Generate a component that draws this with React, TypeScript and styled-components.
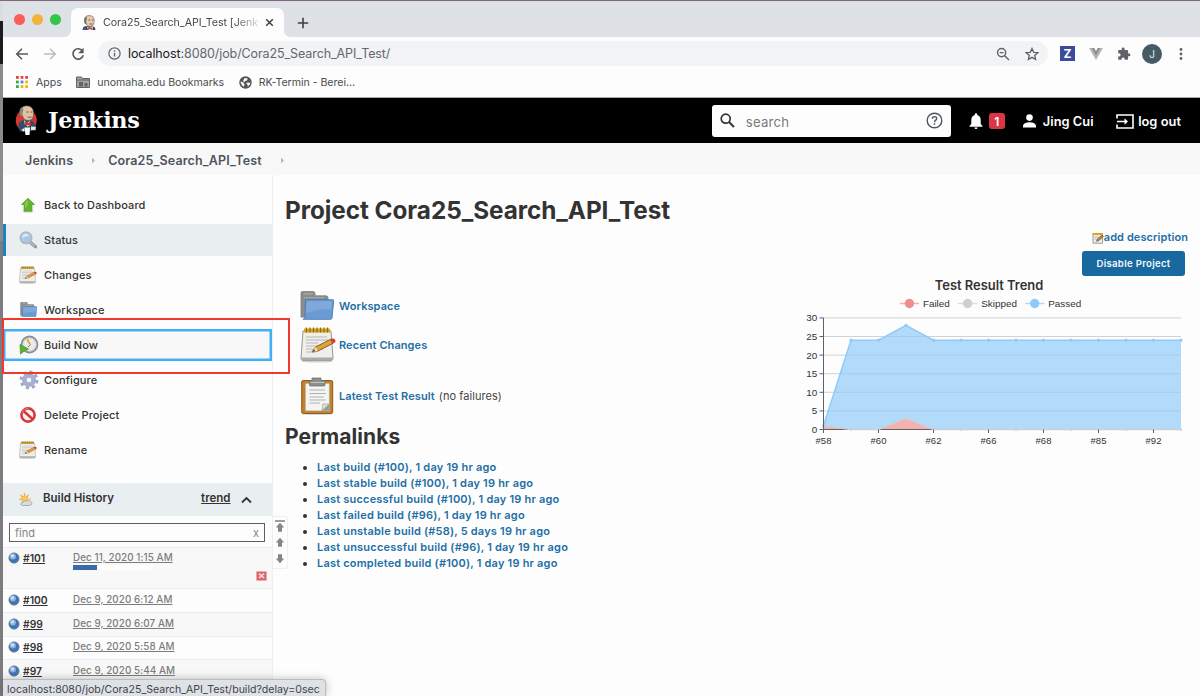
import React from "react";
import styled, { createGlobalStyle, css } from "styled-components";

const sans = `Inter, "Liberation Sans", sans-serif`;

const GlobalStyle = createGlobalStyle`
  *, *::before, *::after { box-sizing: border-box; }
  html, body { margin: 0; padding: 0; background: #fdfdfd; overflow: hidden; }
  body { font-family: ${sans}; color: #333; -webkit-font-smoothing: antialiased; }
  svg { display: block; flex: none; }
  ul, h1, h2, h3, p { margin: 0; padding: 0; }
`;

/* ---------- frame ---------- */

const Desktop = styled.div`
  position: relative;
  width: 1200px;
  height: 696px;
  overflow: hidden;
  padding: 1px 0 0 3px;
  background: linear-gradient(#dcdcdc 0 20px, #1c1c1c 20px 63px, #8b8b8e 63px 240px, #7c7c80 240px);
  border-top: 1px solid #7f6a86;
`;

const Window = styled.div`
  display: flex;
  flex-direction: column;
  height: 694px;
  background: #fdfdfd;
  border-top-left-radius: 4px;
  overflow: hidden;
`;

/* ---------- browser chrome ---------- */

const TabStrip = styled.div`
  display: flex;
  align-items: flex-end;
  height: 35px;
  background: #dee1e6;
`;

const Lights = styled.div`
  display: flex;
  gap: 7px;
  align-self: center;
  width: 68px;
  padding: 0 0 1px 11px;
`;

const Light = styled.span<{ $c: string }>`
  width: 11px;
  height: 11px;
  border-radius: 50%;
  background: ${(p) => p.$c};
`;

const Tab = styled.div`
  position: relative;
  display: flex;
  align-items: center;
  width: 213px;
  height: 29px;
  padding: 0 10px 0 11px;
  background: #fdfdfd;
  border-radius: 7px 7px 0 0;
  &::before, &::after {
    content: "";
    position: absolute;
    bottom: 0;
    width: 6px;
    height: 6px;
  }
  &::before { left: -6px; background: radial-gradient(circle at 0 0, transparent 5.5px, #fdfdfd 6px); }
  &::after { right: -6px; background: radial-gradient(circle at 100% 0, transparent 5.5px, #fdfdfd 6px); }
`;

const TabTitle = styled.span`
  flex: 1;
  margin-left: 7px;
  white-space: nowrap;
  font-size: 10.7px;
  letter-spacing: -0.06px;
  color: #45494d;
  mask-image: linear-gradient(90deg, #000 132px, transparent 160px);
`;

const NewTab = styled.div`
  align-self: center;
  margin: 7px 0 0 13px;
`;

const Toolbar = styled.div`
  display: flex;
  align-items: center;
  height: 32px;
  padding: 1px 12px 0 12px;
`;

const NavIcons = styled.div`
  display: flex;
  gap: 14px;
  width: 83px;
`;

const Omnibox = styled.div`
  display: flex;
  align-items: center;
  width: 950px;
  height: 25px;
  padding: 0 9px 0 10px;
  border-radius: 13px;
  background: #f1f3f4;
`;

const Url = styled.span`
  flex: 1;
  margin-left: 7px;
  font-size: 12.5px;
  letter-spacing: -0.1px;
  color: #63676b;
  b { font-weight: 400; color: #1f2124; }
`;

const OmniActions = styled.div`
  display: flex;
  gap: 15px;
`;

const Extensions = styled.div`
  display: flex;
  align-items: center;
  justify-content: space-between;
  width: 123px;
  margin-left: 12px;
`;

const Avatar = styled.span`
  display: grid;
  place-items: center;
  width: 20px;
  height: 20px;
  margin: 0 3px 0 -3px;
  border-radius: 50%;
  background: #455a64;
  color: #e6eaec;
  font-size: 10px;
`;

const ZBadge = styled.span`
  display: grid;
  place-items: center;
  width: 15px;
  height: 15px;
  background: #3a4a9f;
  color: #fff;
  font: 700 12px/15px ${sans};
`;

const Bookmarks = styled.div`
  display: flex;
  align-items: center;
  height: 29px;
  padding: 0 0 2px 13px;
  font-size: 10.6px;
  color: #494d51;
  border-bottom: 1px solid #a9a9a9;
`;

const Bookmark = styled.span<{ $gap: number; $inner: number }>`
  display: flex;
  align-items: center;
  gap: ${(p) => p.$inner}px;
  margin-right: ${(p) => p.$gap}px;
  letter-spacing: -0.03px;
  white-space: nowrap;
`;

/* ---------- Jenkins header ---------- */

const Header = styled.header`
  display: flex;
  align-items: center;
  height: 45px;
  padding: 0 19px 0 12px;
  background: #000;
  color: #fff;
`;

const Brand = styled.span`
  flex: 1;
  margin: 0 0 1px 11px;
  font: 700 22.3px/30px "DejaVu Serif", serif;
  letter-spacing: -0.3px;
`;

const SearchBox = styled.div`
  display: flex;
  align-items: center;
  width: 239px;
  height: 32px;
  padding: 0 8px;
  border-radius: 3px;
  background: #fdfdfd;
  color: #7a7a7a;
  font-size: 13.2px;
  letter-spacing: 0.2px;
  span { flex: 1; margin: 2px 0 0 11px; }
`;

const HeaderItem = styled.div<{ $ml: number; $gap: number }>`
  display: flex;
  align-items: center;
  gap: ${(p) => p.$gap}px;
  margin-left: ${(p) => p.$ml}px;
  padding-top: 1px;
  font-size: 12.8px;
  font-weight: 600;
  letter-spacing: 0.05px;
  white-space: nowrap;
`;

const Count = styled.span`
  display: grid;
  place-items: center;
  width: 16px;
  height: 16px;
  border-radius: 3px;
  background: #dc3545;
  font-size: 12px;
`;

const Crumbs = styled.nav`
  display: flex;
  align-items: center;
  height: 32px;
  padding: 2px 0 0 22px;
  background: #f8f8f8;
  color: #4d545d;
  font-size: 12.5px;
  font-weight: 600;
  letter-spacing: 0.14px;
  svg { margin: 0 12px 0 18px; }
`;

/* ---------- sidebar ---------- */

const Body = styled.div`
  display: flex;
  flex: 1;
  min-height: 0;
`;

const Sidebar = styled.aside`
  display: flex;
  flex-direction: column;
  width: 270px;
  border-right: 1px solid #eceff3;
  overflow: hidden;
  flex: none;
`;

const Tasks = styled.ul`
  display: flex;
  flex-direction: column;
  gap: 3px;
  padding: 14px 0 17px;
  list-style: none;
`;

const Task = styled.li<{ $state?: "active" | "focus" }>`
  display: flex;
  align-items: center;
  gap: 7px;
  height: 32px;
  padding: 0 0 1px 16px;
  font-size: 11px;
  font-weight: 500;
  letter-spacing: 0.12px;
  color: #333;
  ${(p) =>
    p.$state === "active" &&
    css`
      background: #e9eef1;
      box-shadow: inset 3px 0 #1b83c4;
    `}
  ${(p) =>
    p.$state === "focus" &&
    css`
      background: #f8f8f8;
      box-shadow: inset 0 0 0 2.5px #42b0f5;
    `}
`;

const HistoryHead = styled.div`
  display: flex;
  align-items: center;
  height: 33px;
  padding: 0 20px 3px 15px;
  background: #e9eef1;
  font-size: 11.5px;
  font-weight: 600;
  u { margin: 0 10.5px 0 auto; text-underline-offset: 1px; }
  strong { margin-left: 10px; font-weight: 600; }
  svg { position: relative; top: 1.5px; }
`;

const FindRow = styled.div`
  height: 31px;
  padding: 7px 7px 0 6px;
`;

const Find = styled.div`
  display: flex;
  justify-content: space-between;
  align-items: center;
  height: 19px;
  padding: 0 5px;
  border: 1px solid #5f5f5f;
  font-size: 11px;
  color: #858585;
`;

const Build = styled.div<{ $alt?: boolean; $tall?: boolean }>`
  display: flex;
  flex: none;
  align-items: ${(p) => (p.$tall ? "flex-start" : "center")};
  height: ${(p) => (p.$tall ? 41 : 23.8)}px;
  padding: ${(p) => (p.$tall ? "4px 5px 0 5px" : "0 5px 1px")};
  border-top: 1px solid #e6eef5;
  background: ${(p) => (p.$alt ? "#f8f8f8" : "#fdfdfd")};
  u { text-underline-offset: 1px; }
`;

const BuildNo = styled.u`
  width: 50px;
  margin-left: 3px;
  font-size: 10.3px;
  font-weight: 600;
  color: #333;
`;

const BuildDate = styled.div`
  flex: 1;
  color: #7c7c7c;
  font-size: 9.8px;
  line-height: 12px;
  font-weight: 500;
  letter-spacing: 0.1px;
`;

const Progress = styled.div`
  width: 80px;
  height: 5px;
  margin-top: 1px;
  background: #fdfdfd;
  &::before { content: ""; display: block; width: 24px; height: 5px; background: #3a6ba8; }
`;

const StopCell = styled.div`
  align-self: flex-end;
  padding-bottom: 7px;
`;

const Pager = styled.div`
  position: absolute;
  left: 273px;
  top: 515px;
  display: flex;
  flex-direction: column;
  align-items: center;
  gap: 5px;
  width: 15px;
  height: 53px;
  padding-top: 3px;
  border: 1px solid #eceff3;
  border-left: 0;
  border-radius: 0 3px 3px 0;
`;

/* ---------- main ---------- */

const Main = styled.main`
  display: flex;
  flex: 1;
  justify-content: space-between;
  padding: 0 12px 0 12px;
`;

const Left = styled.div`
  flex: 1;
`;

const Title = styled.h1`
  height: 30px;
  margin-top: 20px;
  font-size: 24.3px;
  line-height: 30px;
  font-weight: 700;
  letter-spacing: -0.05px;
  white-space: nowrap;
`;

const Links = styled.div`
  padding: 62px 0 0 15px;
`;

const LinkRow = styled.div<{ $h: number }>`
  display: flex;
  align-items: center;
  height: ${(p) => p.$h}px;
  gap: 3px;
  font-size: 11px;
  white-space: nowrap;
`;

const LinkIcon = styled.span`
  width: 36px;
`;

const Note = styled.span`
  margin-left: 1px;
  color: #444;
  letter-spacing: 0.06px;
`;

const Anchor = styled.a<{ $ls?: number }>`
  color: #1f6fa5;
  font-weight: 600;
  letter-spacing: ${(p) => p.$ls ?? 0.08}px;
`;

const Subtitle = styled.h2`
  margin-top: -3px;
  font-size: 21px;
  line-height: 26px;
  font-weight: 700;
  letter-spacing: 0.1px;
`;

const Permalinks = styled.ul`
  margin-top: 10.4px;
  padding-left: 32px;
  font-size: 11px;
  line-height: 15.93px;
`;

const Right = styled.div`
  display: flex;
  flex-direction: column;
  align-items: flex-end;
  width: 390px;
  padding-top: 54px;
`;

const AddDescription = styled.div`
  display: flex;
  align-items: center;
  height: 15px;
  font-size: 11px;
  svg { margin-top: 2px; }
`;

const Button = styled.button`
  width: 103px;
  height: 25px;
  margin: 7px 3px -1px 0;
  padding: 0;
  border: 0;
  border-radius: 3px;
  background: #1769a0;
  color: #f3f8fb;
  font: 600 9.6px/25px ${sans};
  letter-spacing: 0.3px;
`;

const StatusBubble = styled.div`
  position: absolute;
  left: 3px;
  bottom: 0;
  width: 323px;
  height: 17px;
  padding-left: 4px;
  border: 1px solid #b9bcc1;
  border-left: 0;
  border-bottom: 0;
  border-radius: 0 4px 0 0;
  background: #dee1e6;
  box-shadow: 0 0 8px rgba(0, 0, 0, 0.25);
  color: #3f4347;
  font-size: 10.6px;
  letter-spacing: -0.015px;
  line-height: 19px;
  white-space: nowrap;
`;

const Highlight = styled.div`
  position: absolute;
  left: 2px;
  top: 317px;
  width: 288px;
  height: 56px;
  border: 2px solid #f2382c;
`;

/* ---------- drawings ---------- */

const ButlerLogo = () => (
  <svg width="22" height="31" viewBox="0 0 22 31">
    <ellipse cx="11.300" cy="15.500" rx="10.500" ry="11.300" fill="#d33833" />
    <path d="M3.500 19Q6 15 10 15l6 .5q4.500 1.500 4.500 5.500l-1.500 4-4 1.500H5q-2-3-1.500-7.500z" fill="#2f4d66" />
    <path d="M9 15l3 3 3-2 .3 4.500-3 1-2.500-2z" fill="#dfe3e6" />
    <path d="M10.300 17l2.700 1.300 3.200-1.500v4L13 19.700l-2.700 1.300z" fill="#d33833" stroke="#7d1512" strokeWidth=".4" />
    <path d="M6 7Q5.500 1 11.500 .8 18 .8 18.500 7.500q.5 7-4.500 8-5 .3-6.500-4.500Q6 9.500 6 7z" fill="#dfc2a2" stroke="#5d4a3c" strokeWidth=".6" />
    <path d="M5.300 10.500Q3 4.500 7 2L8.500 4.500 7.500 8l.3 3.500z" fill="#8a8580" />
    <path d="M11.500 7h2M15.500 7h1.800M12.500 12q2 1 4-.3" stroke="#5a4636" strokeWidth=".9" fill="none" />
    <path d="M9.500 22.500h5.500l-.5 7.500h-4z" fill="#fff" />
    <path d="M6.500 24.500l3-1.500v3l-1.500.5z" fill="#e6e9ea" />
    <path d="M16 21.500l5 .3-.5 3.500-4.500-.3z" fill="#dfe3e5" />
  </svg>
);

const ButlerFavicon = () => (
  <svg width="14" height="15" viewBox="0 0 14 15">
    <path d="M.5 15q0-3.500 3.500-4l7 .3q2.500.7 2.500 3.700z" fill="#3c4650" />
    <path d="M4.500 11l3 2 4-2-1 4H6z" fill="#eceff1" />
    <path d="M2.800 5Q2.500.8 7 .6q5 0 5.200 4.700.2 5.700-3.700 6.300Q5 11.800 4 8.500 2.800 7.500 2.800 5z" fill="#e8cdb0" stroke="#6b5647" strokeWidth=".6" />
    <path d="M2.600 8.500Q1 3.500 4 1.500L5 3 4.300 6l.2 3.500z" fill="#77706a" />
    <path d="M6.500 5h1.700M9.800 5h1.500M7.500 9h3" stroke="#5a4636" strokeWidth=".9" />
    <path d="M5.500 12.200l2.500 1 2.500-1V15L8 14l-2.500 1z" fill="#d33833" />
    <path d="M1 12.500h3V15H1z" fill="#365d94" />
  </svg>
);

const NotepadIcon = ({ size }: { size: number }) => (
  <svg width={size} height={size} viewBox="0 0 36 36">
    <ellipse cx="17" cy="34.300" rx="16" ry="1.300" fill="#d2d2d2" />
    <path d="M3 4h28l2 27q0 2.500-2 2.500H3q-2 0-2-2.500z" fill="#eeeeec" stroke="#969892" strokeWidth="1" />
    <path d="M1.200 30.500h31.600V32q-.5 1.500-2 1.500H3.500q-2 0-2.300-1.500z" fill="#aaaca6" />
    <path d="M6 10h21M6 13h22M6 16h12M6 19h21M6 22h17M6 25h10" stroke="#b8b9b5" strokeWidth="1" />
    <path d="M4 1.500h26v4H4z" fill="#d9a31b" />
    <path d="M6.500 .5v5M10 .5v5M13.500 .5v5M17 .5v5M20.500 .5v5M24 .5v5M27.500 .5v5" stroke="#8a6b1e" strokeWidth="1.200" />
    <path d="M12 25l3.500-5L31 12l2.500 4-15.500 8z" fill="#e0a13c" stroke="#7d531a" strokeWidth=".9" />
    <path d="M12 25l3.500-5 2.500 4z" fill="#f3dfb8" />
    <path d="M12 25l2-2.800 1 1.700z" fill="#333" />
    <path d="M30 12.500l2-1q3.700-.5 3.500 3.500L32.500 16.500z" fill="#dc3a2c" />
  </svg>
);

const FolderIcon = ({ w, h }: { w: number; h: number }) => (
  <svg width={w} height={h} viewBox="0 0 34 30" preserveAspectRatio="none">
    <path d="M1 2q0-1.500 1.500-1.500H13q2 0 2 2V5h11q2 0 2 2v20H1z" fill="#8b8d8a" stroke="#7b7d78" strokeWidth=".8" />
    <path d="M4 3h9M4 7h20" stroke="#adafab" />
    <path d="M5.500 9H33q.8 0 .7 1L32 28q-.2 1.300-1.500 1.300H3q2 0 2-3z" fill="#6b9bd4" stroke="#4a78b0" strokeWidth=".9" />
    <path d="M6.500 10.500H32L31 19Q17 18 6 23z" fill="#7fa9db" />
  </svg>
);

const ClipboardIcon = () => (
  <svg width="36" height="38" viewBox="0 0 36 38">
    <ellipse cx="17" cy="37" rx="15" ry="1" fill="#d6d6d6" />
    <rect x="1.700" y="3.500" width="31" height="33" rx="1.500" fill="#c1802b" stroke="#8f5e1c" />
    <path d="M5.500 6.500h23.800v27.300H5.500z" fill="#f4f4f2" stroke="#b9b9b5" strokeWidth=".6" />
    <path d="M29.300 27v6.800H22z" fill="#9a9c97" />
    <path d="M22 33.800L29.300 27h-6.500z" fill="#dcdcd8" stroke="#888" strokeWidth=".5" />
    <path d="M9.500 13H25M9.500 16.500H26M9.500 20H24M9.500 23h16M9.500 26H20" stroke="#b1b2af" />
    <path d="M12 1h9v2.500h4V8q0 1-1 1H10.500q-1 0-1-1V3.500H12z" fill="#8c8e8a" stroke="#6c6e69" strokeWidth=".7" />
    <path d="M10.500 5.500h14" stroke="#c3c5c0" />
  </svg>
);

const UpIcon = () => (
  <svg width="18" height="18" viewBox="0 0 18 18">
    <ellipse cx="9" cy="15.800" rx="6" ry="1" fill="#d9e2d4" />
    <path d="M9 2.200L15.500 8.500H13V15.200H5V8.500H2.500z" fill="#62b52d" stroke="#4f9a25" strokeWidth=".7" />
    <path d="M9 3.500L4.800 7.800H6V13L9 9z" fill="#80c94d" />
  </svg>
);

const SearchIcon = () => (
  <svg width="18" height="18" viewBox="0 0 18 18">
    <path d="M11 11l5.500 4.700" stroke="#8f9296" strokeWidth="3.200" strokeLinecap="round" />
    <path d="M11 11l5 4.300" stroke="#c3c5c8" strokeWidth="1.200" />
    <circle cx="7" cy="6.800" r="5.800" fill="#a9c6ea" stroke="#b2b7be" strokeWidth="1.500" />
    <path d="M3 7q0-4 4-4.300Q9 3 10 5q-4 0-7 2z" fill="#dde9f7" />
  </svg>
);

const ClockIcon = () => (
  <svg width="20" height="20" viewBox="0 0 20 20">
    <circle cx="10.500" cy="9.500" r="8" fill="#ececE4" stroke="#8a8c9c" strokeWidth="1.800" />
    <circle cx="10.500" cy="9.500" r="6.500" fill="none" stroke="#c5c7cf" strokeWidth=".8" />
    <path d="M8 4.500l3.500 5.200L9 12" stroke="#777" strokeWidth="1" fill="none" />
    <path d="M7.500 4.500l2-.5 1.500 4-1.500.5z" fill="#e8a92e" />
    <path d="M1 9.500L9.500 14 6 15.500 1.500 19z" fill="#56b52c" stroke="#3f9020" strokeWidth=".7" />
  </svg>
);

const GearIcon = () => (
  <svg width="20" height="20" viewBox="0 0 20 20">
    <circle cx="10" cy="10" r="7.800" fill="none" stroke="#9ca7c6" strokeWidth="3.200" strokeDasharray="3.100 3.030" />
    <circle cx="10" cy="10" r="4.900" fill="none" stroke="#a7b1ce" strokeWidth="4.200" />
    <circle cx="10" cy="10" r="2.700" fill="#fdfdfd" stroke="#8f9abb" strokeWidth=".7" />
    <path d="M8 2.200h4l.5 2h-5z" fill="#4b639c" />
  </svg>
);

const BanIcon = () => (
  <svg width="18" height="18" viewBox="0 0 18 18">
    <circle cx="9" cy="9" r="6.600" fill="#faf6f5" stroke="#d83a3f" strokeWidth="2.600" />
    <path d="M4.500 5l9 8" stroke="#d83a3f" strokeWidth="2.600" />
    <path d="M3 7Q4.500 2.500 9 2.400" stroke="#ef7d7c" strokeWidth=".9" fill="none" />
  </svg>
);

const WeatherIcon = () => (
  <svg width="15" height="15" viewBox="0 0 15 15">
    <path d="M6.500 1v3M2.500 3l2 2M10.500 3l-2 2M1 7.500h3M13 7h-2" stroke="#edb13f" strokeWidth="1.200" />
    <circle cx="6.700" cy="7" r="3.200" fill="#f8c85c" stroke="#efa845" strokeWidth=".7" />
    <path d="M4.500 13.500q-2.500-.5-1.500-2.300.7-1 2-.8 1.500-2.300 3.700-1.400Q10.500 7.500 12 9q2.300 1 1.800 2.700-.4 1.800-2.500 1.800z" fill="#dbdcd9" stroke="#a0a29d" strokeWidth=".8" />
  </svg>
);

const Ball = () => (
  <svg width="12" height="12" viewBox="0 0 12 12">
    <circle cx="6" cy="6" r="5.200" fill="#3f74b4" stroke="#7d8b9d" strokeWidth=".7" />
    <circle cx="4.900" cy="4.600" r="3" fill="#8fb6e0" />
    <circle cx="4.500" cy="4" r="1.400" fill="#d5e6f8" />
  </svg>
);

const StopIcon = () => (
  <svg width="11" height="10" viewBox="0 0 11 10">
    <rect x=".4" y=".4" width="10.200" height="9.200" rx="1" fill="#e0656a" stroke="#e9a9ab" strokeWidth=".8" />
    <path d="M3 2.700l5 4.300M8 2.700L3 7" stroke="#f8dcdc" strokeWidth="1.600" />
  </svg>
);

const ArrowGlyph = ({ dir, bar }: { dir: "up" | "down"; bar?: boolean }) => (
  <svg width="10" height={bar ? 12 : 11} viewBox={bar ? "0 0 10 12" : "0 0 10 11"}>
    {bar && <path d="M0 1h10" stroke="#858585" strokeWidth="1.600" />}
    <path
      transform={bar ? "translate(0 2)" : dir === "down" ? "rotate(180 5 5.500)" : undefined}
      d="M5 .8L9.200 5.500H7V9.800H3V5.500H.8z"
      fill="#858585"
    />
  </svg>
);

const NoteEdit = () => (
  <svg width="12" height="12" viewBox="0 0 12 12">
    <path d="M1 1.500h9.500v9.700H1z" fill="#efefec" stroke="#85878a" strokeWidth=".8" />
    <path d="M.6 1h10v2H.6z" fill="#dfa321" />
    <path d="M2.500 5h5M2.500 7h3" stroke="#aaa" strokeWidth=".8" />
    <path d="M4.500 9.300l1-2.300 4.500-4 1.500 1.500L6.800 8.600z" fill="#c98a3a" stroke="#5b3d16" strokeWidth=".6" />
  </svg>
);

const CrumbArrow = () => (
  <svg width="5" height="7" viewBox="0 0 5 7">
    <path d="M1 .5l3 3-3 3z" fill="#b4b8bd" />
  </svg>
);

/* ---------- chart ---------- */

const ChartText = styled.text<{ $size?: number; $weight?: number; $anchor?: string }>`
  font-family: ${sans};
  font-size: ${(p) => p.$size ?? 9.9}px;
  font-weight: ${(p) => p.$weight ?? 400};
  text-anchor: ${(p) => p.$anchor ?? "start"};
  fill: #333;
`;

const AxisText = styled(ChartText)`
  font-family: "Liberation Sans", Arial, sans-serif;
`;

const passed = [1, 24, 24, 28, 24, 24, 24, 24, 24, 24, 24, 24, 24, 24];
const failed = [1, 0, 0, 3, 0, 0, 0, 0, 0, 0, 0, 0, 0, 0];
const ticks = ["#58", "#60", "#62", "#66", "#68", "#85", "#92"];
const X0 = 25.5;
const STEP = 27.5;
const Y0 = 154.5;
const UNIT = 3.72;
const px = (i: number) => X0 + i * STEP;
const py = (v: number) => Y0 - v * UNIT;
const line = (d: number[]) => d.map((v, i) => `${px(i)},${py(v)}`).join(" ");

const Legend = ({ x, color, name }: { x: number; color: string; name: string }) => (
  <g>
    <path d={`M${x} 28.500h19.500`} stroke={color} strokeWidth="1.400" opacity=".7" />
    <circle cx={x + 9.700} cy="28.500" r="4.700" fill={color} />
    <AxisText x={x + 23.200} y="32" $size={9.9}>{name}</AxisText>
  </g>
);

const Chart = () => (
  <svg width="390" height="180" viewBox="0 0 390 180">
    <ChartText x="191" y="15" $size={12.9} $weight={600} $anchor="middle">Test Result Trend</ChartText>
    <Legend x={101.7} color="#ee8f8f" name="Failed" />
    <Legend x={160} color="#cfcfcf" name="Skipped" />
    <Legend x={227} color="#90caf9" name="Passed" />
    {[5, 10, 15, 20, 25, 30].map((v) => (
      <path key={v} d={`M${X0} ${py(v)}H${px(13)}`} stroke="#d2d2d2" strokeWidth="1" />
    ))}
    <polygon points={`${line(passed)} ${px(13)},${Y0} ${X0},${Y0}`} fill="#90caf9" opacity=".7" />
    <polygon points={`${line(failed)} ${px(13)},${Y0} ${X0},${Y0}`} fill="#f5b1b1" />
    <path d={`M${X0} ${Y0}H${px(13)}`} stroke="#5e6166" strokeWidth="1" />
    <polyline points={line(failed)} fill="none" stroke="#cfcfcf" strokeWidth="1.500" />
    <polyline points={line(passed)} fill="none" stroke="#90caf9" strokeWidth="1.500" />
    {passed.map((v, i) => (
      <circle key={i} cx={px(i)} cy={py(v)} r="1.600" fill="#90caf9" />
    ))}
    {failed.map((v, i) => (
      <circle key={i} cx={px(i)} cy={py(v)} r="1.300" fill="#cfcfcf" />
    ))}
    <path d={`M${X0} ${py(30)}V${Y0}`} stroke="#5e6166" strokeWidth="1" />
    {[0, 5, 10, 15, 20, 25, 30].map((v) => (
      <g key={v}>
        <path d={`M${X0 - 4} ${py(v)}h4`} stroke="#5e6166" strokeWidth="1" />
        <AxisText x={X0 - 6.300} y={py(v) + 3.400} $anchor="end">{v}</AxisText>
      </g>
    ))}
    {ticks.map((t, i) => (
      <g key={t}>
        <path d={`M${px(i * 2)} ${Y0}v3.500`} stroke="#5e6166" strokeWidth="1" />
        <AxisText x={px(i * 2)} y={Y0 + 14.500} $size={9.5} $anchor="middle">{t}</AxisText>
      </g>
    ))}
  </svg>
);

const appColors = ["#e8453c", "#e8453c", "#e8453c", "#34a853", "#4285f4", "#f4b400", "#34a853", "#f4b400", "#f4b400"];

const permalinks = [
  "Last build (#100), 1 day 19 hr ago",
  "Last stable build (#100), 1 day 19 hr ago",
  "Last successful build (#100), 1 day 19 hr ago",
  "Last failed build (#96), 1 day 19 hr ago",
  "Last unstable build (#58), 5 days 19 hr ago",
  "Last unsuccessful build (#96), 1 day 19 hr ago",
  "Last completed build (#100), 1 day 19 hr ago",
];

const builds = [
  ["#100", "Dec 9, 2020 6:12 AM"],
  ["#99", "Dec 9, 2020 6:07 AM"],
  ["#98", "Dec 9, 2020 5:58 AM"],
  ["#97", "Dec 9, 2020 5:44 AM"],
];

const IconSlot = styled.span`
  display: grid;
  place-items: center;
  width: 18px;
  height: 20px;
`;

const tasks: { name: string; icon: React.ReactNode; state?: "active" | "focus" }[] = [
  { name: "Back to Dashboard", icon: <UpIcon /> },
  { name: "Status", icon: <SearchIcon />, state: "active" },
  { name: "Changes", icon: <NotepadIcon size={18} /> },
  { name: "Workspace", icon: <FolderIcon w={17} h={15} /> },
  { name: "Build Now", icon: <ClockIcon />, state: "focus" },
  { name: "Configure", icon: <GearIcon /> },
  { name: "Delete Project", icon: <BanIcon /> },
  { name: "Rename", icon: <NotepadIcon size={18} /> },
];

const Chrome = () => (
  <>
    <TabStrip>
      <Lights>
        <Light $c="#fc5b57" />
        <Light $c="#f0b43c" />
        <Light $c="#34c648" />
      </Lights>
      <Tab>
        <ButlerFavicon />
        <TabTitle>Cora25_Search_API_Test [Jenk</TabTitle>
        <svg width="9" height="9" viewBox="0 0 9 9">
          <path d="M1.200 1.200l6.600 6.600M7.800 1.200L1.200 7.800" stroke="#3c4043" strokeWidth="1.500" />
        </svg>
      </Tab>
      <NewTab>
        <svg width="12" height="12" viewBox="0 0 12 12">
          <path d="M6 .8v10.400M.8 6h10.400" stroke="#3c4043" strokeWidth="1.600" />
        </svg>
      </NewTab>
    </TabStrip>
    <Toolbar>
      <NavIcons>
        <svg width="14" height="14" viewBox="0 0 14 14" fill="none" stroke="#55595d" strokeWidth="1.500">
          <path d="M13 7H2M7 1.700L1.700 7 7 12.300" />
        </svg>
        <svg width="14" height="14" viewBox="0 0 14 14" fill="none" stroke="#b8babd" strokeWidth="1.400">
          <path d="M1 7h11M7 1.700L12.300 7 7 12.300" />
        </svg>
        <svg width="14" height="14" viewBox="0 0 14 14" fill="none" stroke="#55595d" strokeWidth="1.600">
          <path d="M11.500 4A5.200 5.200 0 1 0 12.200 8.200" />
          <path d="M12.600 .8v5.500H7.200z" fill="#55595d" stroke="none" />
        </svg>
      </NavIcons>
      <Omnibox>
        <svg width="13" height="13" viewBox="0 0 13 13">
          <circle cx="6.500" cy="6.500" r="5.600" fill="none" stroke="#5f6368" strokeWidth="1.200" />
          <path d="M6.500 5.800v3.700M6.500 3.300v1.500" stroke="#5f6368" strokeWidth="1.300" />
        </svg>
        <Url><b>localhost</b>:8080/job/Cora25_Search_API_Test/</Url>
        <OmniActions>
          <svg width="14" height="14" viewBox="0 0 14 14" fill="none" stroke="#5f6368" strokeWidth="1.400">
            <circle cx="5.600" cy="5.600" r="4.100" />
            <path d="M8.700 8.700L13 13M3.700 5.600h3.800" />
          </svg>
          <svg width="14" height="14" viewBox="0 0 24 24" fill="none" stroke="#5f6368" strokeWidth="2.200">
            <path d="M12 2.500l2.900 6.600 7.100.6-5.400 4.700 1.600 7L12 17.700 5.800 21.400l1.600-7L2 9.700l7.100-.6z" />
          </svg>
        </OmniActions>
      </Omnibox>
      <Extensions>
        <ZBadge>Z</ZBadge>
        <svg width="14" height="12" viewBox="0 0 14 12">
          <path d="M0 0h5l2 3.500L9 0h5L7 12z" fill="#b5b5b5" />
          <path d="M2.800 0H5l2 3.500L9 0h2.200L7 7.500z" fill="#8b8b8b" />
        </svg>
        <svg width="14" height="14" viewBox="0 0 24 24">
          <path d="M20.500 11H19V7c0-1.100-.9-2-2-2h-4V3.500a2.500 2.500 0 0 0-5 0V5H4c-1.100 0-2 .9-2 2v3.800h1.500a2.700 2.700 0 0 1 0 5.400H2V20c0 1.100.9 2 2 2h3.800v-1.500a2.700 2.700 0 0 1 5.400 0V22H17c1.100 0 2-.9 2-2v-4h1.500a2.500 2.500 0 0 0 0-5z" fill="#5f6368" />
        </svg>
        <Avatar>J</Avatar>
        <svg width="4" height="14" viewBox="0 0 4 14" fill="#5f6368">
          <circle cx="2" cy="2.500" r="1.400" />
          <circle cx="2" cy="7" r="1.400" />
          <circle cx="2" cy="11.500" r="1.400" />
        </svg>
      </Extensions>
    </Toolbar>
    <Bookmarks>
      <Bookmark $gap={14.5} $inner={8}>
        <svg width="12" height="12" viewBox="0 0 12 12">
          {appColors.map((c, i) => (
            <rect key={i} x={(i % 3) * 4.600} y={Math.floor(i / 3) * 4.600} width="2.800" height="2.800" fill={c} />
          ))}
        </svg>
        Apps
      </Bookmark>
      <Bookmark $gap={14.5} $inner={7}>
        <svg width="14" height="12" viewBox="0 0 14 12">
          <path d="M.5 1h5l1 1.500h7v9H.5z" fill="#a2a4a6" stroke="#5f6164" />
          <path d="M1 4h12" stroke="#5f6164" />
          <path d="M3 6h4v4.500H3zM8.500 7h3v3.500h-3z" fill="#606265" />
        </svg>
        unomaha.edu Bookmarks
      </Bookmark>
      <Bookmark $gap={0} $inner={7}>
        <svg width="13" height="13" viewBox="0 0 13 13">
          <circle cx="6.500" cy="6.500" r="6.200" fill="#505458" />
          <path d="M1.500 5.500L4 6.200l1.500 2L5 10.800Q2 9.500 1.500 5.500zM5.500 2l3.300.5L8 4.500l-2 .5-.5 1.500L4 5zM8.500 6.500l3 .3Q11 9.500 8.800 10.500l-.3-2-1.500-.8z" fill="#f4f4f4" />
        </svg>
        RK-Termin - Berei…
      </Bookmark>
    </Bookmarks>
  </>
);

export default function App() {
  return (
    <Desktop>
      <GlobalStyle />
      <Window>
        <Chrome />
        <Header>
          <ButlerLogo />
          <Brand>Jenkins</Brand>
          <SearchBox>
            <svg width="15" height="15" viewBox="0 0 15 15" fill="none" stroke="#333" strokeWidth="1.700">
              <circle cx="5.700" cy="5.700" r="4.500" />
              <path d="M9 9l5 5" strokeWidth="2" />
            </svg>
            <span>search</span>
            <svg width="17" height="17" viewBox="0 0 17 17" fill="none" stroke="#4d545d">
              <circle cx="8.500" cy="8.500" r="7.300" strokeWidth="1.400" />
              <path d="M6.300 6.800Q6.300 4.600 8.500 4.600t2.200 2q0 1-1.200 1.800-1 .7-1 1.800" strokeWidth="1.400" />
              <path d="M8.500 11.300v1.500" strokeWidth="1.500" />
            </svg>
          </SearchBox>
          <HeaderItem $ml={18} $gap={6}>
            <svg width="14" height="16" viewBox="0 0 14 16" fill="#fff">
              <path d="M7 .3q1.200 0 1.200 1.200v.4q3.500 1 3.500 5V11L13.500 13v.7H.5V13L2.300 11V6.900q0-4 3.500-5v-.4Q5.800.3 7 .3zM5.400 14.400h3.200Q8.400 16 7 16t-1.600-1.600z" />
            </svg>
            <Count>1</Count>
          </HeaderItem>
          <HeaderItem $ml={18} $gap={7}>
            <svg width="13" height="14" viewBox="0 0 13 14" fill="#fff">
              <circle cx="6.500" cy="3.600" r="3.300" />
              <path d="M0 13.500v-1.700q.5-3.300 6.500-3.500 6 .2 6.500 3.500v1.700z" />
            </svg>
            Jing Cui
          </HeaderItem>
          <HeaderItem $ml={22.5} $gap={4}>
            <svg width="18" height="15" viewBox="0 0 18 15" fill="none" stroke="#fff" strokeWidth="1.600">
              <path d="M1 4.500V1h16v13H1v-3.500M1 7.500h8" />
              <path d="M8.500 4.300L12 7.500l-3.500 3.200z" fill="#fff" stroke="none" />
            </svg>
            log out
          </HeaderItem>
        </Header>
        <Crumbs>
          Jenkins
          <CrumbArrow />
          Cora25_Search_API_Test
          <CrumbArrow />
        </Crumbs>
        <Body>
          <Sidebar>
            <Tasks>
              {tasks.map((t) => (
                <Task key={t.name} $state={t.state}>
                  <IconSlot>{t.icon}</IconSlot>
                  {t.name}
                </Task>
              ))}
            </Tasks>
            <HistoryHead>
              <WeatherIcon />
              <strong>Build History</strong>
              <u>trend</u>
              <svg width="11" height="8" viewBox="0 0 11 8" fill="none" stroke="#333" strokeWidth="1.800">
                <path d="M1 6.500l4.500-4.500L10 6.500" />
              </svg>
            </HistoryHead>
            <FindRow>
              <Find>
                <span>find</span>
                <span>x</span>
              </Find>
            </FindRow>
            <Build $alt $tall>
              <Ball />
              <BuildNo>#101</BuildNo>
              <BuildDate>
                <u>Dec 11, 2020 1:15 AM</u>
                <Progress />
              </BuildDate>
              <StopCell>
                <StopIcon />
              </StopCell>
            </Build>
            {builds.map(([no, date], i) => (
              <Build key={no} $alt={i % 2 === 1}>
                <Ball />
                <BuildNo>{no}</BuildNo>
                <BuildDate>
                  <u>{date}</u>
                </BuildDate>
              </Build>
            ))}
          </Sidebar>
          <Main>
            <Left>
              <Title>Project Cora25_Search_API_Test</Title>
              <Links>
                <LinkRow $h={37}>
                  <LinkIcon><FolderIcon w={34} h={29} /></LinkIcon>
                  <Anchor>Workspace</Anchor>
                </LinkRow>
                <LinkRow $h={41}>
                  <LinkIcon><NotepadIcon size={36} /></LinkIcon>
                  <Anchor>Recent Changes</Anchor>
                </LinkRow>
                <LinkRow $h={62}>
                  <LinkIcon><ClipboardIcon /></LinkIcon>
                  <Anchor>Latest Test Result</Anchor>
                  <Note>(no failures)</Note>
                </LinkRow>
              </Links>
              <Subtitle>Permalinks</Subtitle>
              <Permalinks>
                {permalinks.map((t) => (
                  <li key={t}>
                    <Anchor $ls={0.2}>{t}</Anchor>
                  </li>
                ))}
              </Permalinks>
            </Left>
            <Right>
              <AddDescription>
                <NoteEdit />
                <Anchor>add description</Anchor>
              </AddDescription>
              <Button>Disable Project</Button>
              <Chart />
            </Right>
          </Main>
        </Body>
      </Window>
      <Pager>
        <ArrowGlyph dir="up" bar />
        <ArrowGlyph dir="up" />
        <ArrowGlyph dir="down" />
      </Pager>
      <Highlight />
      <StatusBubble>localhost:8080/job/Cora25_Search_API_Test/build?delay=0sec</StatusBubble>
    </Desktop>
  );
}
